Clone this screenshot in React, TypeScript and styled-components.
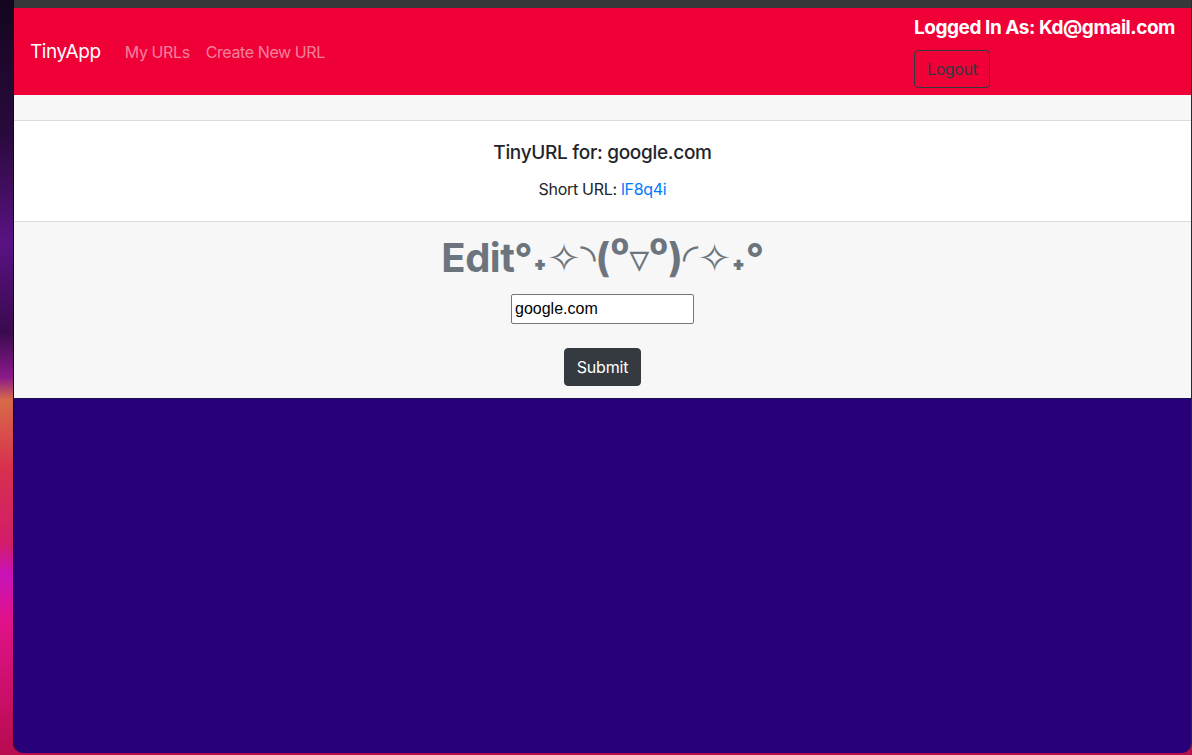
import React, { useState } from 'react';
import styled, { createGlobalStyle } from 'styled-components';

const GlobalStyle = createGlobalStyle`
  html, body {
    margin: 0;
    padding: 0;
    width: 1192px;
    height: 755px;
    overflow: hidden;
  }
  * {
    box-sizing: border-box;
  }
`;

const Desktop = styled.div`
  width: 1192px;
  height: 755px;
  display: flex;
  padding-left: 13px;
  padding-bottom: 2px;
  background: linear-gradient(
    180deg,
    #14061f 0%,
    #2a0a3e 18%,
    #5a1282 32%,
    #3a0a50 44%,
    #8c1a8a 50%,
    #d86a48 53%,
    #d8304e 62%,
    #d21c6a 72%,
    #c812b8 76%,
    #e0128a 82%,
    #b80c4e 100%
  );
`;

const Window = styled.div`
  flex: 1;
  display: flex;
  flex-direction: column;
  border-left: 1px solid #0a0a0a;
  border-right: 1px solid #2a2a2e;
  border-radius: 0 0 10px 10px;
  overflow: hidden;
  font-family: Inter, "Liberation Sans", "DejaVu Sans", sans-serif;
  color: #212529;
`;

const TitleBar = styled.div`
  height: 8px;
  background: #36383b;
`;

const Navbar = styled.nav`
  height: 87px;
  background: #ef0037;
  display: flex;
  align-items: center;
  justify-content: space-between;
  padding: 8px 16px;
`;

const NavLeft = styled.div`
  display: flex;
  align-items: center;
`;

const Brand = styled.a`
  font-size: 19px;
  letter-spacing: -0.4px;
  color: #fff;
  margin-right: 16px;
  line-height: 30px;
  text-decoration: none;
`;

const NavLink = styled.a`
  font-size: 16px;
  letter-spacing: -0.4px;
  color: rgba(255, 255, 255, 0.5);
  padding: 0 8px;
  text-decoration: none;
  line-height: 24px;
`;

const NavRight = styled.div`
  display: flex;
  flex-direction: column;
  align-items: flex-start;
  gap: 10px;
  align-self: flex-start;
`;

const LoggedIn = styled.div`
  font-size: 19px;
  font-weight: 700;
  color: #fff;
  line-height: 24px;
  letter-spacing: -0.45px;
`;

const OutlineButton = styled.button`
  font-family: inherit;
  font-size: 16px;
  letter-spacing: -0.4px;
  line-height: 24px;
  padding: 6px 12px;
  color: #343a40;
  background: transparent;
  border: 1px solid #343a40;
  border-radius: 4px;
  height: 38px;
`;

const Spacer = styled.div`
  height: 26px;
  background: #f7f7f7;
  border-bottom: 1px solid #dcdcdc;
`;

const InfoCard = styled.section`
  background: #fff;
  padding: 20px 0 20px;
  text-align: center;
  border-bottom: 1px solid #dcdcdc;
`;

const CardTitle = styled.h5`
  margin: 0 0 12px;
  font-size: 19px;
  font-weight: 500;
  line-height: 24px;
  letter-spacing: -0.3px;
`;

const CardText = styled.p`
  margin: 0;
  font-size: 16px;
  line-height: 24px;
  letter-spacing: -0.3px;

  a {
    color: #007bff;
    text-decoration: none;
  }
`;

const EditSection = styled.section`
  background: #f7f7f7;
  padding: 12px 0 12px;
  display: flex;
  flex-direction: column;
  align-items: center;
`;

const EditHeading = styled.h1`
  margin: 0 0 12px;
  font-size: 40px;
  font-weight: 700;
  line-height: 48px;
  color: #6c757d;
  letter-spacing: -0.5px;
`;

const Form = styled.form`
  display: flex;
  flex-direction: column;
  align-items: center;
  gap: 24px;
`;

const UrlInput = styled.input`
  width: 183px;
  height: 30px;
  padding: 3px 3px;
  font-family: "Liberation Sans", Arial, sans-serif;
  font-size: 16px;
  color: #000;
  background: #fff;
  border: 1px solid #767676;
  border-radius: 2px;
`;

const DarkButton = styled.button`
  font-family: inherit;
  font-size: 16px;
  letter-spacing: -0.2px;
  line-height: 24px;
  padding: 6px 12px;
  color: #fff;
  background: #343a40;
  border: 1px solid #343a40;
  border-radius: 4px;
  height: 38px;
`;

const Footer = styled.div`
  flex: 1;
  background: #280078;
  border-top: 1px solid #1a1050;
`;

const App: React.FC = () => {
  const [longUrl, setLongUrl] = useState('google.com');

  return (
    <>
      <GlobalStyle />
      <Desktop>
        <Window>
          <TitleBar />
          <Navbar>
            <NavLeft>
              <Brand href="#">TinyApp</Brand>
              <NavLink href="#">My URLs</NavLink>
              <NavLink href="#">Create New URL</NavLink>
            </NavLeft>
            <NavRight>
              <LoggedIn>Logged In As: Kd@gmail.com</LoggedIn>
              <OutlineButton type="button">Logout</OutlineButton>
            </NavRight>
          </Navbar>
          <Spacer />
          <InfoCard>
            <CardTitle>TinyURL for: google.com</CardTitle>
            <CardText>
              Short URL: <a href="#">lF8q4i</a>
            </CardText>
          </InfoCard>
          <EditSection>
            <EditHeading>Edit°˖✧◝(⁰▿⁰)◜✧˖°</EditHeading>
            <Form onSubmit={(e) => e.preventDefault()}>
              <UrlInput value={longUrl} onChange={(e) => setLongUrl(e.target.value)} />
              <DarkButton type="submit">Submit</DarkButton>
            </Form>
          </EditSection>
          <Footer />
        </Window>
      </Desktop>
    </>
  );
};

export default App;
